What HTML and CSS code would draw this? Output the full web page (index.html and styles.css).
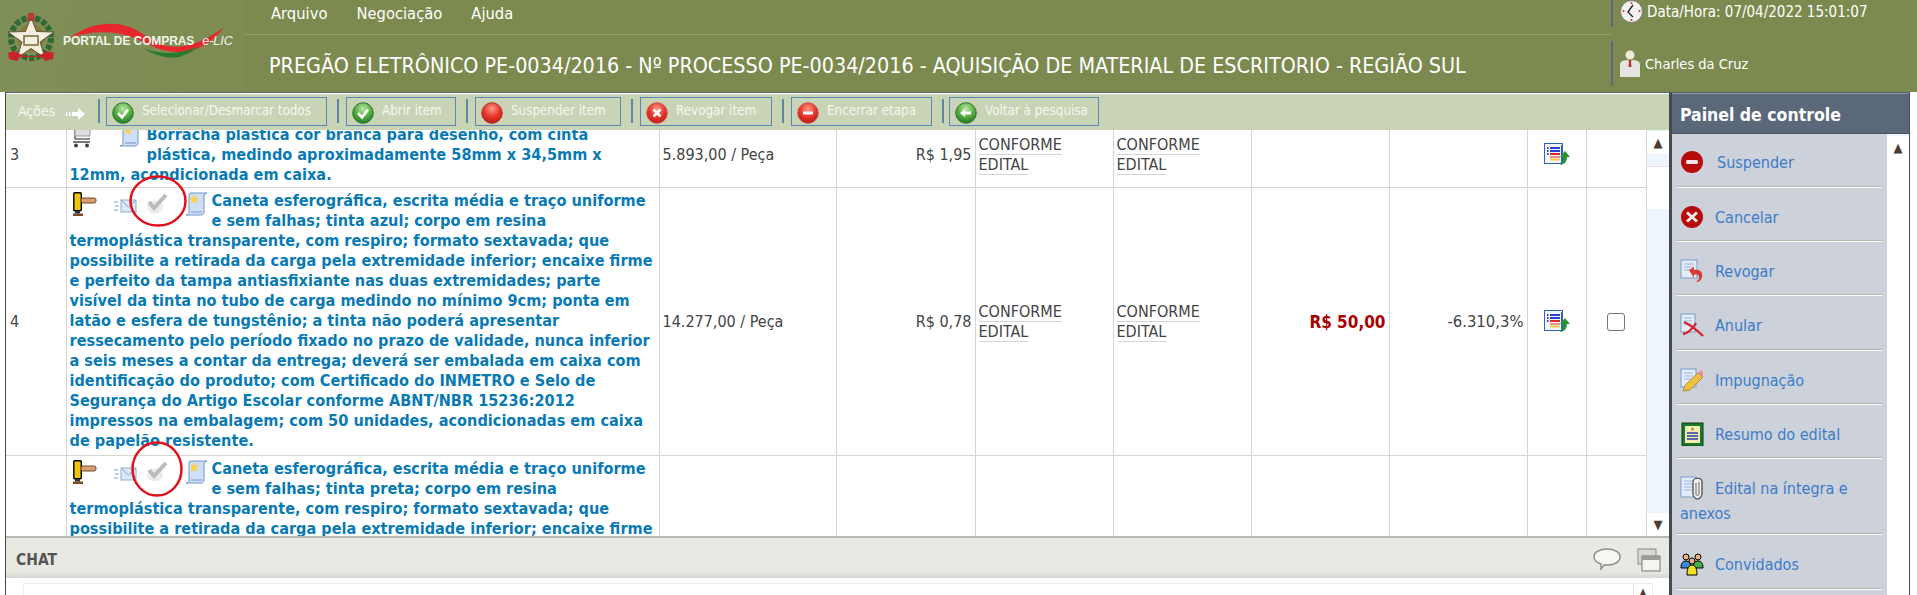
FILE: index.html
```html
<!DOCTYPE html>
<html lang="pt-BR">
<head>
<meta charset="utf-8">
<title>Portal de Compras e-LIC</title>
<link rel="stylesheet" href="styles.css">
</head>
<body>
<svg class="defs" width="0" height="0" aria-hidden="true">
  <defs>
    <radialGradient id="gGreen" cx="50%" cy="30%" r="70%"><stop offset="0" stop-color="#bfe8a8"/><stop offset=".55" stop-color="#58ad42"/><stop offset="1" stop-color="#23782a"/></radialGradient>
    <radialGradient id="gRed" cx="50%" cy="30%" r="70%"><stop offset="0" stop-color="#ff9a8a"/><stop offset=".55" stop-color="#e8362c"/><stop offset="1" stop-color="#b81c14"/></radialGradient>
    <symbol id="i-ok" viewBox="0 0 22 22"><circle cx="11" cy="11" r="10.300" fill="url(#gGreen)" stroke="#2f7a30"/><path d="M6 11l4 4.500 6-8" fill="none" stroke="#fff" stroke-width="2.600"/></symbol>
    <symbol id="i-stop" viewBox="0 0 22 22"><circle cx="11" cy="11" r="10.300" fill="url(#gRed)" stroke="#b53a2c"/></symbol>
    <symbol id="i-x" viewBox="0 0 22 22"><circle cx="11" cy="11" r="10.300" fill="url(#gRed)" stroke="#c8584c"/><path d="M7.500 7.500l7 7M14.500 7.500l-7 7" stroke="#fff" stroke-width="2.600"/></symbol>
    <symbol id="i-minus" viewBox="0 0 22 22"><circle cx="11" cy="11" r="10.300" fill="url(#gRed)" stroke="#c8584c"/><rect x="6" y="9.500" width="10" height="3" fill="#fff"/></symbol>
    <symbol id="i-back" viewBox="0 0 22 22"><circle cx="11" cy="11" r="10.300" fill="url(#gGreen)" stroke="#2f7d30"/><path d="M5 11l5-4v2.600h6v3h-6V15z" fill="#fff"/></symbol>
    <symbol id="i-report" viewBox="0 0 26 23"><rect x=".5" y=".5" width="18" height="20" fill="#f4f7ff" stroke="#2d62c0"/><rect x="17" y="2" width="2" height="19" fill="#2d62c0"/><path d="M6 5h10" stroke="#2a3fd0" stroke-width="2"/><path d="M6 8h10" stroke="#2a3fd0" stroke-width="2"/><path d="M6 11h10" stroke="#e02828" stroke-width="2"/><path d="M6 14h10" stroke="#e02828" stroke-width="1"/><path d="M6 16.500h10" stroke="#f0d040" stroke-width="2"/><path d="M3 5h1.500M3 8h1.500M3 11h1.500" stroke="#2a3fd0" stroke-width="2"/><path d="M21 8l5 6h-3c0 5-3 8-8 8 3-1 4-4 4-8h-3z" fill="#25952c"/></symbol>
    <symbol id="i-doc" viewBox="0 0 24 24"><path d="M5 1h17l-3 2v17c0 2-1 3-3 3H1c2 0 3-1 3-3V3z" fill="#cfe0f6" stroke="#6f96c8"/><path d="M9 2l1.500 3.500 3.500.3-2.700 2.400.9 3.600L9 10l-3 1.800.9-3.600L4.500 5.800 8 5.500z" fill="#f6d34a"/><path d="M6 20h11" stroke="#6f96c8"/></symbol>
    <symbol id="i-mail" viewBox="0 0 24 14"><rect x="8" y="1" width="15" height="12" fill="#dbe8f8" stroke="#8db0d8"/><path d="M8 1l7.500 7L23 1" fill="none" stroke="#7da2cc"/><path d="M1 3h4M2 7h4M1 11h4" stroke="#a8c4e4" stroke-width="1.500"/></symbol>
    <symbol id="i-check" viewBox="0 0 22 20"><ellipse cx="9" cy="13" rx="8" ry="6.500" fill="#ececec"/><path d="M3 8l5 6L20 1" fill="none" stroke="#bcbcbc" stroke-width="4"/></symbol>
    <symbol id="i-hammer" viewBox="0 0 24 24"><rect x=".8" y=".8" width="7.500" height="18" rx="1" fill="#f1c40f" stroke="#000" stroke-width="1.400"/><rect x="8" y="6" width="15" height="5" rx="2" fill="#d8a070" stroke="#6d4a30"/><path d="M0 21.500h10V24H0z" fill="#7b4a20"/><path d="M2 19h5v2.500H2z" fill="#333"/></symbol>
    <symbol id="i-cart" viewBox="0 0 22 22"><path d="M1 2h4v11h15" fill="none" stroke="#666" stroke-width="1.500"/><path d="M5 3h15v7H5z" fill="#ddd" stroke="#999"/><path d="M3 15h17v2H3z" fill="#777"/><circle cx="6" cy="19.500" r="2" fill="#444"/><circle cx="17" cy="19.500" r="2" fill="#444"/></symbol>
  </defs>
</svg>

<header class="topbar">
  <div class="logo">
    <svg class="logo-art" viewBox="0 0 245 92" width="245" height="92" aria-hidden="true">
      <path d="M70 38C84 27 100 23 115 24c20 1 32 14 45 20 15 6 38 3 64-17-12 17-29 26-49 25-17-1-30-10-43-15C115 31 90 30 70 38z" fill="#e8272c"/>
      <path d="M143 48c12 8 27 12 39 8 8-3 13-6 16-10-13 7-28 8-40 6-6-1-11-2-15-4z" fill="#2a7a32"/>
      <circle cx="31" cy="38" r="20" fill="none" stroke="#2f6a34" stroke-width="6" stroke-dasharray="5 2"/>
      <circle cx="31" cy="38" r="14" fill="#8a7a3c"/>
      <path d="M31 17l5.500 14.500 17.500.5-14 10 5 16-14-9.500-14 9.500 5-16-14-10 17.500-.5z" fill="#f2efe0" stroke="#5b4a30" stroke-width=".9"/>
      <path d="M24 36h14v9H24z" fill="none" stroke="#7b6a30" stroke-width="1.500"/>
      <path d="M8 53l7-2c8 7 24 7 32 0l7 2-1 6-8 2-3-4H20l-3 4-8-2z" fill="#c9242a"/>
      <path d="M28 13h6l1 8h-8z" fill="#b83c34"/>
    </svg>
    <div class="logo-text"><span class="logo-name">PORTAL DE COMPRAS</span><em class="logo-lic">e-LIC</em></div>
  </div>
  <div class="top-main">
    <nav class="menu"><a>Arquivo</a><a>Negociação</a><a>Ajuda</a></nav>
    <h1 class="title">PREGÃO ELETRÔNICO PE-0034/2016 - Nº PROCESSO PE-0034/2016 - AQUISIÇÃO DE MATERIAL DE ESCRITORIO - REGIÃO SUL</h1>
  </div>
  <div class="top-side">
    <div class="side-line side-date">
      <svg width="23" height="24" viewBox="0 0 23 24" aria-hidden="true"><circle cx="11.500" cy="11.500" r="11" fill="#f2f2ee" stroke="#777"/><path d="M13 5l-5 7 5 5" fill="none" stroke="#222" stroke-width="1.300"/><circle cx="3.500" cy="11" r="1" fill="#c33"/><circle cx="19.500" cy="11" r="1" fill="#c33"/><circle cx="11.500" cy="3" r="1" fill="#c33"/><circle cx="11.500" cy="20" r="1" fill="#c33"/></svg>
      <span>Data/Hora: 07/04/2022 15:01:07</span>
    </div>
    <div class="side-line side-user">
      <svg width="22" height="27" viewBox="0 0 22 27" aria-hidden="true"><circle cx="11" cy="5" r="4.500" fill="#f0e8dc"/><path d="M1 27V15c0-4 3-5 10-5s10 1 10 5v12z" fill="#e4e4e0"/><path d="M9.500 10h3l-.5 2 .5 5h-3l.5-5z" fill="#b8322a"/></svg>
      <span>Charles da Cruz</span>
    </div>
  </div>
</header>

<div class="workspace">
  <main class="content">
    <div class="toolbar">
      <span class="tb-label">Ações</span>
      <svg class="tb-arrow" width="20" height="12" viewBox="0 0 20 12" aria-hidden="true"><path d="M7 4h6V0l7 6-7 6V8H7z" fill="#fff"/><path d="M1 4h1.500v4H1zM4 4h1.500v4H4z" fill="#fff"/></svg>
      <i class="tb-sep"></i>
      <a class="tb-btn tb-b1"><svg><use href="#i-ok"/></svg><span>Selecionar/Desmarcar todos</span></a>
      <i class="tb-sep"></i>
      <a class="tb-btn tb-b2"><svg><use href="#i-ok"/></svg><span>Abrir item</span></a>
      <i class="tb-sep"></i>
      <a class="tb-btn tb-b3"><svg><use href="#i-stop"/></svg><span>Suspender item</span></a>
      <i class="tb-sep"></i>
      <a class="tb-btn tb-b4"><svg><use href="#i-x"/></svg><span>Revogar item</span></a>
      <i class="tb-sep"></i>
      <a class="tb-btn tb-b5"><svg><use href="#i-minus"/></svg><span>Encerrar etapa</span></a>
      <i class="tb-sep"></i>
      <a class="tb-btn tb-b6"><svg><use href="#i-back"/></svg><span>Voltar à pesquisa</span></a>
    </div>

    <div class="grid-area">
      <div class="grid-clip">
        <table class="grid">
          <colgroup>
            <col class="c-num"><col class="c-desc"><col class="c-qty"><col class="c-val"><col class="c-mark"><col class="c-mark"><col class="c-bid"><col class="c-pct"><col class="c-ico"><col class="c-chk">
          </colgroup>
          <tr>
            <td>3</td>
            <td class="desc tight">
              <span class="ico-float ico-a"><svg class="i-cart"><use href="#i-cart"/></svg><svg class="i-doc"><use href="#i-doc"/></svg></span>Borracha plastica cor branca para desenho, com cinta plástica, medindo aproximadamente 58mm x 34,5mm x 12mm, acondicionada em caixa.
            </td>
            <td>5.893,00 / Peça</td>
            <td class="num">R$ 1,95</td>
            <td><span class="mark">CONFORME</span><br><span class="mark">EDITAL</span></td>
            <td><span class="mark">CONFORME</span><br><span class="mark">EDITAL</span></td>
            <td></td><td></td>
            <td class="ctr"><svg class="i-report"><use href="#i-report"/></svg></td>
            <td></td>
          </tr>
          <tr>
            <td>4</td>
            <td class="desc">
              <span class="ico-float"><svg class="i-hammer"><use href="#i-hammer"/></svg><svg class="i-mail"><use href="#i-mail"/></svg><svg class="i-check"><use href="#i-check"/></svg><svg class="i-doc"><use href="#i-doc"/></svg></span>Caneta esferográfica, escrita média e traço uniforme e sem falhas; tinta azul; corpo em resina termoplástica transparente, com respiro; formato sextavada; que possibilite a retirada da carga pela extremidade inferior; encaixe firme e perfeito da tampa antiasfixiante nas duas extremidades; parte visível da tinta no tubo de carga medindo no mínimo 9cm; ponta em latão e esfera de tungstênio; a tinta não poderá apresentar ressecamento pelo período fixado no prazo de validade, nunca inferior a seis meses a contar da entrega; deverá ser embalada em caixa com identificação do produto; com Certificado do INMETRO e Selo de Segurança do Artigo Escolar conforme ABNT/NBR 15236:2012 impressos na embalagem; com 50 unidades, acondicionadas em caixa de papelão resistente.
            </td>
            <td>14.277,00 / Peça</td>
            <td class="num">R$ 0,78</td>
            <td><span class="mark">CONFORME</span><br><span class="mark">EDITAL</span></td>
            <td><span class="mark">CONFORME</span><br><span class="mark">EDITAL</span></td>
            <td class="num bid">R$ 50,00</td>
            <td class="num pct">-6.310,3%</td>
            <td class="ctr"><svg class="i-report"><use href="#i-report"/></svg></td>
            <td class="ctr"><span class="chk"></span></td>
          </tr>
          <tr>
            <td></td>
            <td class="desc">
              <span class="ico-float"><svg class="i-hammer"><use href="#i-hammer"/></svg><svg class="i-mail"><use href="#i-mail"/></svg><svg class="i-check"><use href="#i-check"/></svg><svg class="i-doc"><use href="#i-doc"/></svg></span>Caneta esferográfica, escrita média e traço uniforme e sem falhas; tinta preta; corpo em resina termoplástica transparente, com respiro; formato sextavada; que possibilite a retirada da carga pela extremidade inferior; encaixe firme e perfeito da tampa antiasfixiante nas duas extremidades
            </td>
            <td></td><td></td><td></td><td></td><td></td><td></td><td></td><td></td>
          </tr>
        </table>
      </div>
      <div class="vscroll">
        <span class="sb-btn">▲</span>
        <span class="sb-thumb"></span>
        <span class="sb-fill"></span>
        <span class="sb-btn">▼</span>
      </div>
      <svg class="ring ring-1" viewBox="0 0 58 52" aria-hidden="true"><ellipse cx="29" cy="26" rx="27.500" ry="24.500" fill="none" stroke="#e0101c" stroke-width="2.500"/></svg>
      <svg class="ring ring-2" viewBox="0 0 52 56" aria-hidden="true"><ellipse cx="26" cy="28" rx="24.500" ry="26.500" fill="none" stroke="#e0101c" stroke-width="2.500"/></svg>
    </div>

    <section class="chat">
      <div class="chat-head">
        <strong>CHAT</strong>
        <span class="chat-icons">
          <svg width="28" height="22" viewBox="0 0 28 22" aria-hidden="true"><path d="M14 1c7 0 13 3 13 8s-6 8-12 8c-2 0-3 0-4 0l-3 4 0-5C4 15 1 12 1 9c0-5 6-8 13-8z" fill="#f6f6f2" stroke="#8c8c86" stroke-width="1.400"/></svg>
          <svg width="24" height="24" viewBox="0 0 24 24" aria-hidden="true"><rect x="1" y="1" width="18" height="15" fill="#d8d8d4" stroke="#8c8c86"/><rect x="5" y="8" width="18" height="15" fill="#f4f4f0" stroke="#77776f"/><rect x="5" y="8" width="18" height="4" fill="#9c9c96"/></svg>
        </span>
      </div>
      <div class="chat-body"><div class="chat-log"><span class="chat-sb">▲</span></div></div>
    </section>
  </main>

  <aside class="panel">
    <h2 class="panel-head">Painel de controle</h2>
    <div class="panel-body">
      <ul class="pmenu">
        <li class="p-first"><svg class="pi"><use href="#p-suspend"/></svg><a>Suspender</a></li>
        <li><svg class="pi"><use href="#p-cancel"/></svg><a>Cancelar</a></li>
        <li><svg class="pi"><use href="#p-revoke"/></svg><a>Revogar</a></li>
        <li><svg class="pi"><use href="#p-annul"/></svg><a>Anular</a></li>
        <li><svg class="pi"><use href="#p-pen"/></svg><a>Impugnação</a></li>
        <li><svg class="pi"><use href="#p-summary"/></svg><a>Resumo do edital</a></li>
        <li class="p-wrap"><svg class="pi"><use href="#p-clip"/></svg><a>Edital na íntegra e anexos</a></li>
        <li><svg class="pi"><use href="#p-people"/></svg><a>Convidados</a></li>
      </ul>
      <div class="p-scroll"><span class="sb-btn">▲</span><span class="p-track"></span></div>
    </div>
  </aside>
</div>

<svg class="defs" width="0" height="0" aria-hidden="true">
  <defs>
    <symbol id="p-suspend" viewBox="0 0 24 24"><circle cx="12" cy="12" r="11" fill="#b80c0c"/><rect x="6" y="10" width="12" height="4" rx="1.500" fill="#f4e6e6"/></symbol>
    <symbol id="p-cancel" viewBox="0 0 24 24"><circle cx="12" cy="12" r="11" fill="#b80c0c"/><path d="M7 7.500l10 9M17 7.500l-10 9" stroke="#fbeaea" stroke-width="3"/></symbol>
    <symbol id="p-revoke" viewBox="0 0 24 24"><rect x="1" y="1" width="16" height="18" fill="#e4ecf8" stroke="#7a9ccc"/><path d="M4 5h10M4 8h10M4 11h6" stroke="#9ab6dc"/><path d="M9 11l5-3v3c6-1 9 2 8 7-.5 3-3 5-6 5 3-2 4-5 2-7-1-1-3-1-4 0v3z" fill="#d83a34"/></symbol>
    <symbol id="p-annul" viewBox="0 0 24 24"><rect x="1" y="1" width="14" height="18" fill="#e4ecf8" stroke="#7a9ccc"/><path d="M4 5h8M4 8h8M4 11h8" stroke="#9ab6dc"/><path d="M3 21c6-1 10-6 13-11M4 9c6 3 13 8 19 14" fill="none" stroke="#d8222a" stroke-width="2.400"/></symbol>
    <symbol id="p-pen" viewBox="0 0 24 24"><rect x="1" y="1" width="15" height="18" fill="#e4ecf8" stroke="#7a9ccc"/><path d="M4 5h9M4 8h9M4 11h7" stroke="#9ab6dc"/><path d="M18 5l5 4-13 13-7 1 2-6z" fill="#f0c040" stroke="#8c6c20" stroke-width=".6"/><path d="M18 5l2-2c1-1 3 0 3 2v1l-1 3z" fill="#f08a90"/></symbol>
    <symbol id="p-summary" viewBox="0 0 24 24"><rect x="2" y="1" width="21" height="23" fill="#1a7a28" stroke="#0a3c12"/><rect x="5" y="4" width="15" height="17" fill="#f4eeb4"/><circle cx="12.500" cy="7" r="1.600" fill="#a8a040"/><path d="M7 11h11M7 14h11M7 17h11" stroke="#2a3ca8" stroke-width="1.600"/></symbol>
    <symbol id="p-clip" viewBox="0 0 24 24"><rect x="1" y="1" width="15" height="20" fill="#e4ecf8" stroke="#7a9ccc"/><path d="M4 5h9M4 8h9M4 11h9M4 14h9" stroke="#9ab6dc"/><path d="M13 6c0-5 9-5 9 0v12c0 3-3 5-4.500 5S13 21 13 18z" fill="#eee" stroke="#444" stroke-width="1.200"/><path d="M16 7v11c0 2 3 2 3 0V6" fill="none" stroke="#666"/></symbol>
    <symbol id="p-people" viewBox="0 0 24 24"><g stroke="#000" stroke-width="1"><circle cx="6" cy="5" r="3" fill="#f0b080"/><path d="M1 16c0-5 2-7 5-7s5 2 5 7z" fill="#3a8ad8"/><circle cx="18" cy="5" r="3" fill="#f0b080"/><path d="M13 16c0-5 2-7 5-7s5 2 5 7z" fill="#44b048"/><circle cx="12" cy="9" r="3" fill="#f0b080"/><path d="M7 23c0-7 2-10 5-10s5 3 5 10z" fill="#f0e020"/></g></symbol>
  </defs>
</svg>
</body>
</html>
```
FILE: styles.css
```css
* { box-sizing: border-box; }
html, body { margin: 0; height: 100%; }
body {
  width: 1917px;
  height: 595px;
  overflow: hidden;
  background: #fff;
  font-family: "DejaVu Sans Condensed", "DejaVu Sans", sans-serif;
  font-stretch: condensed;
  font-size: 16px;
  color: #444;
}
.defs { position: absolute; }

/* top bar */
.topbar {
  display: flex;
  height: 92px;
  background: #7c8a4f;
  color: #fff;
}
.logo {
  position: relative;
  width: 245px;
  flex: none;
  background: linear-gradient(100deg, #7f8f58, #7d8c52);
}
.logo-art { display: block; }
.logo-text {
  position: absolute;
  left: 63px;
  top: 34px;
  display: flex;
  gap: 8px;
  align-items: baseline;
  color: #f2f3ea;
}
.logo-name { font-size: 12px; font-weight: 700; font-family: "Liberation Sans", sans-serif; letter-spacing: -.1px; }
.logo-lic { font-size: 12.500px; font-family: "Liberation Sans", sans-serif; }
.top-main {
  width: 1366px;
  flex: none;
  display: flex;
  flex-direction: column;
}
.menu {
  height: 35px;
  display: flex;
  gap: 29px;
  padding: 4px 0 0 26px;
  font-size: 16.400px;
  line-height: 20px;
  border-bottom: 1px solid #93a163;
}
.title {
  margin: 0;
  padding: 18px 0 0 24px;
  font-size: 21.340px;
  line-height: 26px;
  font-weight: 400;
  white-space: nowrap;
}
.top-side { flex: 1; display: flex; flex-direction: column; }
.side-line {
  display: flex;
  align-items: center;
  border-left: 2px solid #5c6878;
  padding-left: 7px;
}
.side-date { height: 27px; gap: 4px; padding-bottom: 3px; font-size: 15px; }
.side-user { height: 45px; margin-top: 14px; gap: 4px; font-size: 14.500px; padding-left: 6px; }

/* workspace */
.workspace {
  display: flex;
  height: 503px;
  padding-left: 5px;
  padding-right: 7px;
}
.content {
  width: 1664px;
  flex: none;
  border-left: 1px solid #444;
  border-top: 1px solid #5a6470;
  display: flex;
  flex-direction: column;
  padding-top: 1px;
}

/* toolbar */
.toolbar {
  height: 36px;
  flex: none;
  background: #c9d4b6;
  display: flex;
  align-items: center;
  padding: 0 0 2px 12px;
  color: #f6f7f0;
  font-size: 13.300px;
}
.tb-label { font-size: 14px; width: 47px; }
.tb-arrow { margin-top: 5px; }
.tb-sep {
  width: 2px;
  height: 24px;
  background: #5f86a8;
  margin: 0 7px 0 10px;
}
.tb-arrow + .tb-sep { margin: 0 6px 0 13px; }
.tb-btn {
  height: 29px;
  display: flex;
  align-items: center;
  gap: 8px;
  padding-left: 5px;
  border: 1px solid #5b88b4;
}
.tb-btn span { margin-top: -2px; }
.tb-btn svg { width: 22px; height: 22px; flex: none; margin-top: 3px; }
.tb-b1 { width: 221px; }
.tb-b2 { width: 110px; }
.tb-b3 { width: 146px; }
.tb-b4 { width: 132px; }
.tb-b5 { width: 141px; }
.tb-b6 { width: 150px; margin-left: -2px; }

/* grid */
.grid-area {
  position: relative;
  height: 408px;
  flex: none;
  display: flex;
  border-bottom: 2px solid #b8b8b4;
}
.grid-clip {
  width: 1640px;
  flex: none;
  overflow: hidden;
}
.grid {
  width: 1640px;
  table-layout: fixed;
  border-collapse: collapse;
  margin-top: -9px;
  line-height: 20px;
}
.c-num { width: 60px; }
.c-desc { width: 593px; }
.c-qty { width: 177px; }
.c-val { width: 139px; }
.c-mark { width: 138px; }
.c-bid { width: 138px; }
.c-pct { width: 138px; }
.c-ico { width: 59px; }
.c-chk { width: 60px; }
.grid td {
  border: 1px solid #d6d6d0;
  padding: 0 3px;
  vertical-align: middle;
  border-left: 0;
}
.grid td:last-child { border-right: 0; }
.grid td:first-child { padding-left: 4px; }
.grid td.desc {
  padding: 3px 3px 4px 3px;
  vertical-align: top;
  color: #0a7ab5;
  font-weight: 700;
  font-size: 16.150px;
}
.grid td.desc.tight { padding-bottom: 2px; }
.num { text-align: right; }
.ctr { text-align: center; }
.bid { color: #aa0000; font-weight: 700; font-size: 17px; }
.pct { font-size: 16.500px; }
.mark { border-bottom: 1px solid #d4d4d0; display: inline-block; line-height: 19px; }
.ico-float {
  float: left;
  width: 142px;
  height: 40px;
  display: flex;
  align-items: flex-start;
  padding: 1px 0 0 3px;
}
.ico-float svg { flex: none; }
.i-hammer { width: 24px; height: 24px; }
.i-mail { width: 24px; height: 14px; margin: 7px 0 0 16px; }
.i-check { width: 22px; height: 20px; margin: 2px 0 0 9px; }
.i-doc { width: 24px; height: 24px; margin-left: 17px; }
.ico-float.ico-a { width: 77px; padding-left: 0; }
.ico-a .i-cart { width: 22px; height: 22px; }
.ico-a .i-doc { margin-left: 27px; margin-top: -3px; }
.i-report { width: 26px; height: 23px; display: block; margin: 0 auto; }
.chk {
  display: block;
  width: 18px;
  height: 18px;
  margin: 0 auto;
  border: 1px solid #767676;
  border-radius: 3px;
  background: #fff;
}
.vscroll {
  width: 23px;
  flex: none;
  background: #eef5fc;
  border-left: 1px solid #d6d6d0;
  display: flex;
  flex-direction: column;
  padding-top: 1px;
}
.sb-btn {
  display: flex;
  align-items: center;
  justify-content: center;
  height: 23px;
  background: #fff;
  color: #4a3c34;
  font-size: 13px;
  flex: none;
}
.sb-thumb {
  height: 43px;
  margin-top: 12px;
  background: #fff;
  border-top: 1px solid #e4e4e0;
  flex: none;
}
.sb-fill { flex: 1; }
.ring { position: absolute; }
.ring-1 { left: 123px; top: 45px; width: 58px; height: 52px; }
.ring-2 { left: 125px; top: 311px; width: 52px; height: 56px; }

/* chat */
.chat { flex: 1; min-height: 0; overflow: hidden; }
.chat-head {
  height: 40px;
  background: linear-gradient(#e9e9e4 85%, #d6d6d0);
  display: flex;
  align-items: center;
  justify-content: space-between;
  padding: 3px 8px 0 10px;
  color: #555;
  font-size: 15.500px;
}
.chat-icons { display: flex; gap: 16px; margin-top: 0; }
.chat-body { padding: 5px 16px 0 17px; }
.chat-log {
  height: 40px;
  border: 1px solid #ecece8;
  border-bottom: 0;
  display: flex;
  justify-content: flex-end;
}
.chat-sb {
  width: 19px;
  border-left: 1px solid #e4e4e0;
  text-align: center;
  font-size: 10px;
  color: #4a3c34;
  padding-top: 2px;
}

/* panel */
.panel {
  width: 241px;
  flex: none;
  border-left: 3px solid #444a50;
  border-right: 1px solid #444a50;
  border-top: 1px solid #5a6470;
  display: flex;
  flex-direction: column;
  min-height: 0;
}
.panel-head {
  margin: 0;
  height: 41px;
  flex: none;
  background: #5a6879;
  border-top: 1px solid #8b97a6;
  border-bottom: 1px solid #48525e;
  color: #fff;
  font-size: 17.500px;
  line-height: 43px;
  padding-left: 8px;
  font-weight: 700;
}
.panel-body {
  flex: 1;
  min-height: 0;
  display: flex;
  overflow: hidden;
}
.pmenu {
  list-style: none;
  margin: 0;
  padding: 0 5px 0 5px;
  width: 215px;
  flex: none;
  background: #cdd1d9;
  color: #3a7ccb;
  font-size: 16px;
}
.pmenu li {
  min-height: 54.400px;
  padding: 17px 0 8px 3px;
  line-height: 25px;
  border-bottom: 1px solid #fff;
  box-shadow: inset 0 -1px 0 #b4b4ac;
}
.pmenu li.p-first { min-height: 53.500px; padding-top: 16px; }
.pmenu li.p-first a { margin-left: 2px; }
.pmenu li.p-wrap { min-height: 76px; padding-bottom: 6px; }
.pi { width: 24px; height: 24px; vertical-align: -6px; margin-right: 11px; }
.p-scroll {
  width: 22px;
  flex: none;
  display: flex;
  flex-direction: column;
  background: #eef5fc;
  height: 418px;
}
.p-scroll .sb-btn { margin-top: 2px; }
.p-track { flex: 1; background: #fff; }
```
